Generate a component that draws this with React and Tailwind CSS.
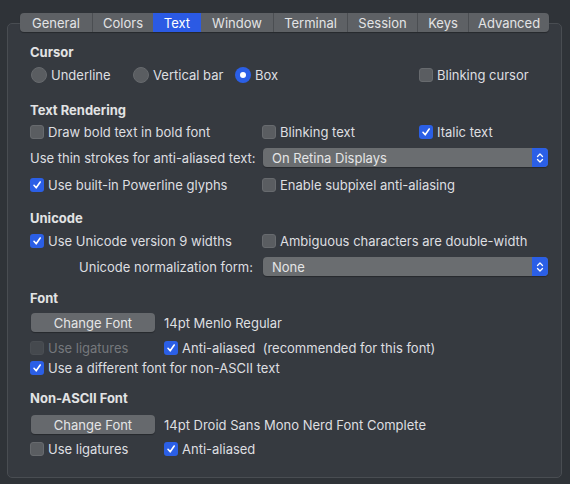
import React from 'react';

const tabs = ['General', 'Colors', 'Text', 'Window', 'Terminal', 'Session', 'Keys', 'Advanced'];
const tabWidths = [72, 61, 48, 72, 74, 70, 51, 81];

const Checkbox = ({ checked, disabled, label, className = '' }) => (
  <div className={`flex items-center h-4 ${className}`}>
    {checked ? (
      <span className="w-[14px] h-[14px] rounded-[3px] bg-[#2b5fe6] flex items-center justify-center shrink-0">
        <svg width="10" height="10" viewBox="0 0 10 10">
          <polyline points="2,5.3 4.2,7.8 8.2,2" fill="none" stroke="#fff" strokeWidth="1.6" strokeLinecap="round" strokeLinejoin="round" />
        </svg>
      </span>
    ) : (
      <span
        className={`w-[14px] h-[14px] rounded-[3px] shrink-0 border ${
          disabled ? 'bg-[#45494e] border-[#4a4e53]' : 'bg-[#5a5d61] border-[#676a6e]'
        }`}
      />
    )}
    <span className={`ml-1 whitespace-pre ${disabled ? 'text-[#75787c]' : 'text-[#dedfe0]'}`}>{label}</span>
  </div>
);

const Radio = ({ checked, label, className = '' }) => (
  <div className={`flex items-center h-4 ${className}`}>
    {checked ? (
      <span className="w-4 h-4 rounded-full bg-[#2b5fe6] flex items-center justify-center shrink-0">
        <span className="w-[6px] h-[6px] rounded-full bg-white" />
      </span>
    ) : (
      <span className="w-4 h-4 rounded-full bg-[#5a5d61] border border-[#676a6e] shrink-0" />
    )}
    <span className="ml-1 whitespace-nowrap text-[#dedfe0]">{label}</span>
  </div>
);

const Select = ({ value }) => (
  <div className="ml-[10px] w-[285px] h-[19px] rounded-[4px] bg-[#6a6d70] flex items-center shadow-[0_1px_1px_rgba(0,0,0,0.3)]">
    <span className="flex-1 pl-[9px] text-[#e4e5e6] whitespace-nowrap">{value}</span>
    <span className="w-4 h-[19px] rounded-r-[4px] bg-[#2b5fe6] flex items-center justify-center">
      <svg width="8" height="12" viewBox="0 0 8 12">
        <polyline points="1.5,4.5 4,2 6.5,4.5" fill="none" stroke="#fff" strokeWidth="1.3" strokeLinecap="round" strokeLinejoin="round" />
        <polyline points="1.5,7.5 4,10 6.5,7.5" fill="none" stroke="#fff" strokeWidth="1.3" strokeLinecap="round" strokeLinejoin="round" />
      </svg>
    </span>
  </div>
);

const Header = ({ children, className = '' }) => (
  <div className={`h-4 flex items-center font-bold text-[#e2e3e4] ${className}`}>{children}</div>
);

const Button = ({ children }) => (
  <button className="ml-px w-[124px] h-[19px] rounded-[4px] bg-[#66696d] text-[#e4e5e6] flex items-center justify-center shadow-[0_1px_1px_rgba(0,0,0,0.3)]">
    {children}
  </button>
);

export default function App() {
  return (
    <div
      className="w-[570px] h-[484px] bg-[#2f3338] overflow-hidden text-[13px] leading-4"
      style={{ fontFamily: 'Inter, "Noto Sans", sans-serif' }}
    >
      {/* Tab bar */}
      <div className="relative z-10 ml-[20px] mt-[13px] w-[529px] h-[19px] flex rounded-[4px] overflow-hidden bg-[#5e6165] shadow-[0_1px_1px_rgba(0,0,0,0.3)]">
        {tabs.map((t, i) => (
          <div
            key={t}
            style={{ width: tabWidths[i] }}
            className={`h-full flex items-center justify-center text-[#e3e4e5] ${
              t === 'Text' ? 'bg-[#2b5ae4] text-white' : ''
            } ${i > 0 && t !== 'Text' && tabs[i - 1] !== 'Text' ? 'border-l border-[#4b4e52]' : ''}`}
          >
            {t}
          </div>
        ))}
      </div>

      {/* Box */}
      <div className="-mt-[9px] ml-[7px] w-[555px] h-[455px] rounded-[5px] border border-[#494d52] bg-[#363a40] pl-[22px] pt-[20px]">
        <Header>Cursor</Header>
        <div className="flex mt-[7px]">
          <Radio label="Underline" className="ml-px w-[102px]" />
          <Radio label="Vertical bar" className="w-[102px]" />
          <Radio checked label="Box" className="w-[184px]" />
          <Checkbox label="Blinking cursor" />
        </div>

        <Header className="mt-[19px]">Text Rendering</Header>
        <div className="flex mt-[6px]">
          <Checkbox label="Draw bold text in bold font" className="w-[232px]" />
          <Checkbox label="Blinking text" className="w-[157px]" />
          <Checkbox checked label="Italic text" />
        </div>
        <div className="flex items-center mt-[8px]">
          <span className="w-[223px] text-right text-[#dedfe0] whitespace-nowrap">Use thin strokes for anti-aliased text:</span>
          <Select value="On Retina Displays" />
        </div>
        <div className="flex mt-[10px]">
          <Checkbox checked label="Use built-in Powerline glyphs" className="w-[232px]" />
          <Checkbox label="Enable subpixel anti-aliasing" />
        </div>

        <Header className="mt-[17px]">Unicode</Header>
        <div className="flex mt-[7px]">
          <Checkbox checked label="Use Unicode version 9 widths" className="w-[232px]" />
          <Checkbox label="Ambiguous characters are double-width" />
        </div>
        <div className="flex items-center mt-[8px]">
          <span className="w-[223px] text-right text-[#dedfe0] whitespace-nowrap">Unicode normalization form:</span>
          <Select value="None" />
        </div>

        <Header className="mt-[14px]">Font</Header>
        <div className="flex items-center mt-[7px]">
          <Button>Change Font</Button>
          <span className="ml-[9px] text-[#dedfe0]">14pt Menlo Regular</span>
        </div>
        <div className="flex mt-[8px]">
          <Checkbox disabled label="Use ligatures" className="w-[134px]" />
          <Checkbox checked label="Anti-aliased  (recommended for this font)" />
        </div>
        <div className="flex mt-[4px]">
          <Checkbox checked label="Use a different font for non-ASCII text" />
        </div>

        <Header className="mt-[14px]">Non-ASCII Font</Header>
        <div className="flex items-center mt-[9px]">
          <Button>Change Font</Button>
          <span className="ml-[9px] text-[#dedfe0]">14pt Droid Sans Mono Nerd Font Complete</span>
        </div>
        <div className="flex mt-[7px]">
          <Checkbox label="Use ligatures" className="w-[134px]" />
          <Checkbox checked label="Anti-aliased" />
        </div>
      </div>
    </div>
  );
}
